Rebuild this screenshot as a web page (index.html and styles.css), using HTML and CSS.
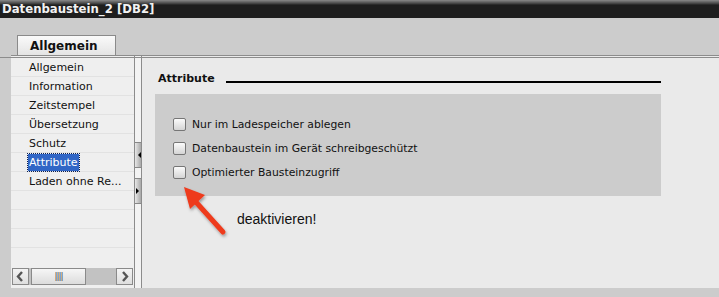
FILE: index.html
```html
<!DOCTYPE html>
<html lang="de">
<head>
    <meta charset="UTF-8">
    <title>Datenbaustein_2 [DB2]</title>
    <link rel="stylesheet" href="styles.css">
</head>
<body>
    <div class="titlebar">Datenbaustein_2 [DB2]</div>
    <div class="tabstrip">
        <div class="tab">Allgemein</div>
    </div>
    <div class="editor">
        <div class="nav">
            <ul class="nav-list">
                <li>Allgemein</li>
                <li>Information</li>
                <li>Zeitstempel</li>
                <li>Übersetzung</li>
                <li>Schutz</li>
                <li><span class="selected">Attribute</span></li>
                <li>Laden ohne Re...</li>
                <li></li>
                <li></li>
                <li></li>
            </ul>
            <div class="hscroll">
                <div class="sbtn">
                    <svg width="15" height="15" viewBox="0 0 15 15"><polyline points="9,3 5,7.5 9,12" fill="none" stroke="#555" stroke-width="2.4"/></svg>
                </div>
                <div class="thumb">||||</div>
                <div class="track"></div>
                <div class="sbtn">
                    <svg width="15" height="15" viewBox="0 0 15 15"><polyline points="6,3 10,7.5 6,12" fill="none" stroke="#555" stroke-width="2.4"/></svg>
                </div>
            </div>
        </div>
        <div class="splitter">
            <div class="split-btn left"></div>
            <div class="split-btn right"></div>
        </div>
        <div class="content">
            <div class="section-head">
                <span>Attribute</span>
                <div class="rule"></div>
            </div>
            <div class="group">
                <label class="check"><span class="box"></span>Nur im Ladespeicher ablegen</label>
                <label class="check"><span class="box"></span>Datenbaustein im Gerät schreibgeschützt</label>
                <label class="check"><span class="box"></span>Optimierter Bausteinzugriff</label>
            </div>
            <div class="note">deaktivieren!</div>
        </div>
    </div>

    <!-- annotation arrow drawn over the form -->
    <svg class="annot" width="60" height="60" viewBox="0 0 60 60">
        <defs>
            <filter id="sh" x="-30%" y="-30%" width="160%" height="160%">
                <feDropShadow dx="1" dy="2" stdDeviation="1.5" flood-color="#000" flood-opacity="0.35"/>
            </filter>
        </defs>
        <g filter="url(#sh)">
            <line x1="44" y1="47" x2="16" y2="16" stroke="#ee3a1c" stroke-width="5" stroke-linecap="round"/>
            <polygon points="5,2 26,10 11,24" fill="#ee3a1c"/>
        </g>
    </svg>
</body>
</html>
```

FILE: styles.css
```css
body {
    margin: 0;
    background: #cccccc;
    font-family: 'DejaVu Sans', 'Verdana', sans-serif;
    font-size: 11px;
    color: #111;
    width: 719px;
    height: 297px;
    overflow: hidden;
    position: relative;
}
.titlebar {
    height: 18px;
    background: linear-gradient(#8a8a8a 0, #3a3a3a 4px, #1e1e1e 5px, #1e1e1e 100%);
    color: #f2f2f2;
    font-family: 'DejaVu Sans Condensed', 'DejaVu Sans', sans-serif;
    font-stretch: condensed;
    font-weight: bold;
    font-size: 13px;
    line-height: 17px;
    padding-left: 2px;
    box-sizing: border-box;
}
.tabstrip {
    height: 37px;
    padding-left: 17px;
    display: flex;
    align-items: flex-end;
}
.tab {
    width: 99px;
    height: 20px;
    box-sizing: border-box;
    border: 1px solid #8a8a8a;
    border-bottom: none;
    background: linear-gradient(#fafafa, #e4e4e4);
    font-size: 12px;
    font-weight: 600;
    line-height: 21px;
    padding-left: 12px;
}
.editor {
    display: flex;
    height: 232px;
    margin-left: 11px;
    border-top: 1px solid #8c8c8c;
    position: relative;
}
.editor::before {
    content: "";
    position: absolute;
    left: -11px;
    right: 0;
    top: 1px;
    border-top: 1px solid #8c8c8c;
}
.nav {
    width: 124px;
    background: #efefef;
    border-right: 1px solid #8c8c8c;
    display: flex;
    flex-direction: column;
    padding-top: 2px;
    box-sizing: border-box;
}
.nav-list {
    list-style: none;
    margin: 0;
    padding: 0;
    flex: 1;
}
.nav-list li {
    height: 19px;
    line-height: 20px;
    border-bottom: 1px solid #e2e2e2;
    box-sizing: border-box;
    padding-left: 18px;
    white-space: nowrap;
}
.selected {
    background: #3166c6;
    color: #fff;
    outline: 1px dotted #0a1e50;
    padding: 2px 1px;
    margin-left: -1px;
}
.hscroll {
    display: flex;
    height: 17px;
    margin: 0 1px 3px 1px;
    background: #c2c2c2;
}
.sbtn {
    width: 17px;
    box-sizing: border-box;
    border: 1px solid #8a8a8a;
    background: linear-gradient(#f4f4f4, #dedede);
    display: flex;
}
.thumb {
    width: 55px;
    margin-left: 2px;
    box-sizing: border-box;
    border: 1px solid #8a8a8a;
    background: linear-gradient(#f6f6f6, #dcdcdc);
    font-size: 9px;
    letter-spacing: -1px;
    color: #444;
    text-align: center;
    line-height: 15px;
}
.track {
    flex: 1;
}
.splitter {
    width: 6px;
    background: #f3f3f3;
    border-right: 1px solid #8c8c8c;
    display: flex;
    flex-direction: column;
    padding-top: 86px;
    gap: 10px;
}
.split-btn {
    height: 24px;
    background: linear-gradient(90deg, #e8e8e8, #a8a8a8);
    border-top: 1px solid #888;
    border-bottom: 1px solid #888;
    position: relative;
}
.split-btn::after {
    content: "";
    position: absolute;
    top: 9px;
    border-top: 3px solid transparent;
    border-bottom: 3px solid transparent;
}
.split-btn.left::after {
    right: 0;
    border-right: 3px solid #000;
}
.split-btn.right::after {
    left: 1px;
    border-left: 3px solid #000;
}
.content {
    flex: 1;
    background: #eaeaea;
    padding: 12px 58px 0 13px;
}
.section-head {
    display: flex;
    align-items: flex-end;
    gap: 11px;
    height: 17px;
    padding-left: 3px;
    font-weight: bold;
    font-size: 11px;
}
.rule {
    flex: 1;
    border-bottom: 2px solid #000;
    margin-bottom: 2px;
}
.group {
    margin-top: 9px;
    background: #cccccc;
    height: 102px;
    box-sizing: border-box;
    padding: 24px 0 0 18px;
    display: flex;
    flex-direction: column;
    gap: 11px;
}
.check {
    display: flex;
    align-items: center;
    gap: 6px;
    height: 13px;
    font-size: 10.8px;
}
.box {
    width: 13px;
    height: 13px;
    box-sizing: border-box;
    border: 1px solid #767676;
    border-radius: 2px;
    background: linear-gradient(#fbfbfb, #d4d4d4);
}
.note {
    margin: 15px 0 0 82px;
    font-family: 'Liberation Sans', Arial, sans-serif;
    font-size: 14px;
}
.annot {
    position: absolute;
    left: 179px;
    top: 185px;
}
```
